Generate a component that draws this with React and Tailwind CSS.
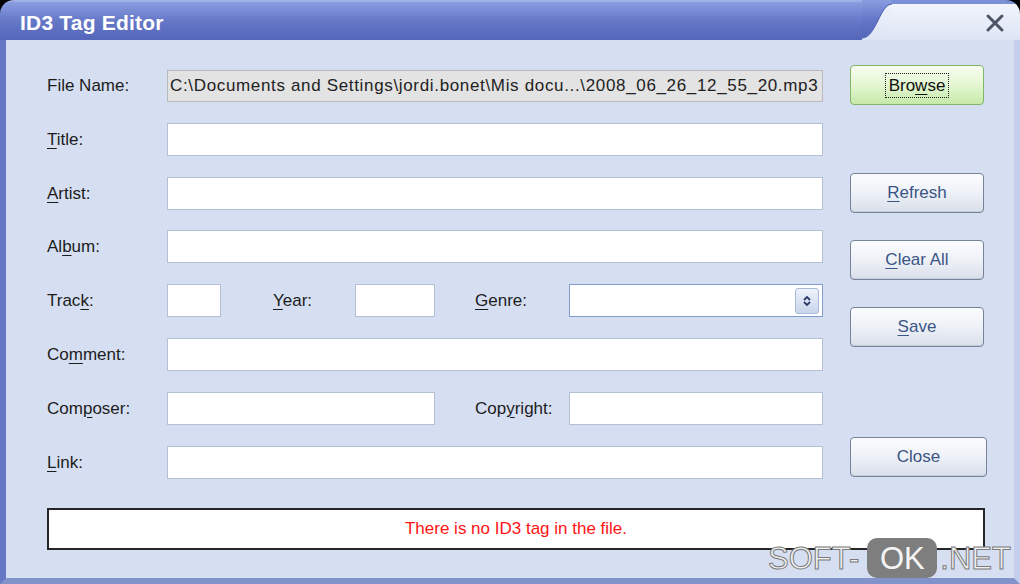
import React from "react";

const font = { fontFamily: '"Liberation Sans", Arial, sans-serif' };

function Label({ children, w = "w-[120px]", cls = "" }) {
  return (
    <div className={`${w} ${cls} shrink-0 text-[17px] text-[#1c1c1c] leading-none`}>{children}</div>
  );
}

function U({ children }) {
  return <span className="underline decoration-1 underline-offset-[3px]">{children}</span>;
}

function Input({ w = "w-[656px]" }) {
  return <div className={`${w} h-[33px] shrink-0 bg-white border border-[#b4c0d6]`} />;
}

function Btn({ children, w = "w-[134px]", cls = "" }) {
  return (
    <div
      className={`${w} ${cls} h-[40px] rounded-[4px] border border-[#77839a] bg-gradient-to-b from-[#fbfcfe] via-[#eef1f7] to-[#d9dfea] flex items-center justify-center text-[17px] text-[#3a5584] shadow-[inset_0_-1px_0_#c5ccda]`}
    >
      {children}
    </div>
  );
}

export default function App() {
  return (
    <div className="w-[1020px] h-[584px] bg-black relative overflow-hidden" style={font}>
      <div className="w-full h-full flex flex-col rounded-t-[14px] overflow-hidden">
        {/* Title bar */}
        <div className="h-[40px] flex shrink-0">
          <div className="flex-1 bg-gradient-to-b from-[#8a9de0] via-[#6577c7] to-[#5466b9] border-t-[2px] border-[#9fb0e8] flex items-center pl-[20px] pt-[3px]">
            <span className="text-white font-bold text-[21px] tracking-[0.2px]">ID3 Tag Editor</span>
          </div>
          <svg width="30" height="40" viewBox="0 0 30 40" className="shrink-0 block">
            <defs>
              <linearGradient id="tb" x1="0" y1="0" x2="0" y2="1">
                <stop offset="0" stopColor="#8a9de0" />
                <stop offset="0.5" stopColor="#6577c7" />
                <stop offset="1" stopColor="#5466b9" />
              </linearGradient>
              <linearGradient id="lt" x1="0" y1="0" x2="0" y2="1">
                <stop offset="0" stopColor="#f1f4fb" />
                <stop offset="1" stopColor="#dde5f5" />
              </linearGradient>
            </defs>
            <rect x="0" y="0" width="30" height="40" fill="url(#lt)" />
            <path d="M0 0 H30 V4 C18 4 14 38 0 38 Z" fill="url(#tb)" />
            <path d="M0 38 C14 38 18 4 30 4" fill="none" stroke="#4b5db0" strokeWidth="1" />
          </svg>
          <div className="w-[128px] shrink-0 bg-gradient-to-b from-[#f1f4fb] to-[#dde5f5] border-t-[4px] border-[#7a90d6] flex items-center justify-end pr-[15px] pt-[2px]">
            <svg width="20" height="20" viewBox="0 0 20 20">
              <path d="M3 3 L17 17 M17 3 L3 17" stroke="#4d5466" strokeWidth="3" strokeLinecap="round" />
            </svg>
          </div>
        </div>

        {/* Body */}
        <div className="flex-1 bg-[#d6dff2] border-l-[6px] border-l-[#6377c5] border-r-[6px] border-r-[#c3cfec] border-b-[6px] border-b-[#8293cb] flex flex-col">
          <div className="flex">
            {/* Form */}
            <div className="pl-[41px] pt-[29px] flex flex-col gap-[20.8px]">
              <div className="h-[33px] flex items-center">
                <Label>File Name:</Label>
                <div className="w-[656px] h-[32px] bg-[#e3e3e3] border border-[#b9b9b9] flex items-center pl-[2px] text-[17px] text-[#222] whitespace-nowrap overflow-hidden tracking-[0.66px]">
                  C:\Documents and Settings\jordi.bonet\Mis docu...\2008_06_26_12_55_20.mp3
                </div>
              </div>
              <div className="h-[33px] flex items-center">
                <Label><U>T</U>itle:</Label>
                <Input />
              </div>
              <div className="h-[33px] flex items-center">
                <Label><U>A</U>rtist:</Label>
                <Input />
              </div>
              <div className="h-[33px] flex items-center">
                <Label>Al<U>b</U>um:</Label>
                <Input />
              </div>
              <div className="h-[33px] flex items-center">
                <Label>Trac<U>k</U>:</Label>
                <Input w="w-[54px]" />
                <Label w="w-[82px]" cls="ml-[52px]"><U>Y</U>ear:</Label>
                <Input w="w-[80px]" />
                <Label w="w-[94px]" cls="ml-[40px]"><U>G</U>enre:</Label>
                <div className="w-[254px] h-[33px] bg-white border border-[#7f9dcc] flex items-center justify-end pr-[3px]">
                  <div className="w-[24px] h-[26px] rounded-[3px] border border-[#a9b9d6] bg-gradient-to-b from-[#eef2fa] to-[#c9d5ec] flex items-center justify-center">
                    <svg width="10" height="12" viewBox="0 0 10 12">
                      <path d="M2 5 L5 2 L8 5 M2 7 L5 10 L8 7" fill="none" stroke="#2b3a66" strokeWidth="1.8" />
                    </svg>
                  </div>
                </div>
              </div>
              <div className="h-[33px] flex items-center">
                <Label>Co<U>m</U>ment:</Label>
                <Input />
              </div>
              <div className="h-[33px] flex items-center">
                <Label>Com<U>p</U>oser:</Label>
                <Input w="w-[268px]" />
                <Label w="w-[94px]" cls="ml-[40px]">Cop<U>y</U>right:</Label>
                <Input w="w-[254px]" />
              </div>
              <div className="h-[33px] flex items-center">
                <Label><U>L</U>ink:</Label>
                <Input />
              </div>
            </div>

            {/* Buttons */}
            <div className="ml-[27px] pt-[25px] flex flex-col">
              <div className="w-[134px] h-[40px] rounded-[4px] border border-[#80b56a] bg-gradient-to-b from-[#f7fdf0] via-[#e4f6d2] to-[#c6e9a9] flex items-center justify-center text-[17px] text-[#111]">
                <span className="border border-dotted border-[#222] px-[3px] py-[3px] leading-none">
                  Bro<U>w</U>se
                </span>
              </div>
              <Btn cls="mt-[68px]"><U>R</U>efresh</Btn>
              <Btn cls="mt-[27px]"><U>C</U>lear All</Btn>
              <Btn cls="mt-[27px]"><U>S</U>ave</Btn>
              <Btn w="w-[137px]" cls="mt-[90px]">Close</Btn>
            </div>
          </div>

          {/* Status */}
          <div className="ml-[41px] mt-[29px] w-[938px] h-[42px] bg-white border-2 border-[#262626] flex items-center justify-center text-[17px] text-[#ff1414]">
            There is no ID3 tag in the file.
          </div>
        </div>
      </div>

      {/* Watermark */}
      <div className="absolute left-[768px] top-[538px] h-[40px] flex items-center text-[31px] leading-none">
        <span className="text-[#f2f2f2] [-webkit-text-stroke:1px_#7a7a7a]">SOFT-</span>
        <span className="ml-[8px] w-[70px] h-[40px] rounded-[10px] bg-[#7e7e7e] flex items-center justify-center text-[#f4f4f4]">OK</span>
        <span className="ml-[3px] text-[#f2f2f2] [-webkit-text-stroke:1px_#7a7a7a]">.NET</span>
      </div>
    </div>
  );
}
